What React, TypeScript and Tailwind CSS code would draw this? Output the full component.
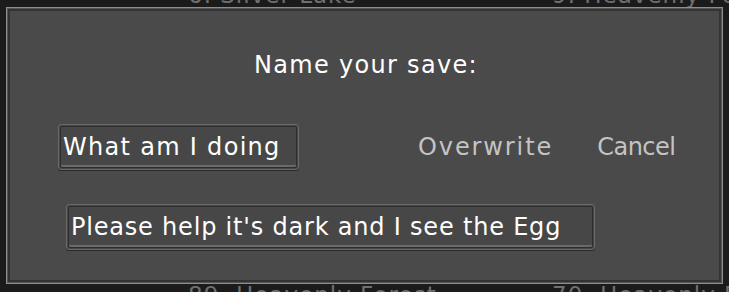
const font = { fontFamily: '"DejaVu Sans", "Liberation Sans", sans-serif' };

const SaveInput = ({ value, width, tracking }: { value: string; width: string; tracking: string }) => (
  <div
    className={`${width} h-[46px] rounded-[3px] border border-[#6a6a6a] bg-[#474747] p-[1px] shadow-[0_1px_0_#2a2a2a]`}
  >
    <div className="flex h-full items-center rounded-[2px] border border-[#2e2e2e] px-[2px] shadow-[inset_0_-2px_0_#6a6a6a]">
      <span className={`whitespace-nowrap text-[24px] leading-none text-white ${tracking}`}>{value}</span>
    </div>
  </div>
);

export default function App() {
  return (
    <div className="relative h-[292px] w-[729px] overflow-hidden bg-[#1b1b1b]" style={font}>
      {/* list behind the dialog */}
      <div className="grid h-full grid-cols-[188px_364px_1fr] grid-rows-[1fr_1fr] text-[23px] leading-none tracking-[1px] text-[#6f6f6f]">
        <div />
        <div className="-mt-[16px]">6. Silver Lake</div>
        <div className="-mt-[16px] whitespace-nowrap">9. Heavenly Forest</div>
        <div />
        <div className="self-end -mb-[15px] whitespace-nowrap">89. Heavenly Forest</div>
        <div className="self-end -mb-[15px] whitespace-nowrap">70. Heavenly Forest</div>
      </div>

      {/* dialog */}
      <div className="absolute left-[6px] top-[7px] h-[277px] w-[717px] border border-[#8e8e8e] bg-[#4a4a4a] shadow-[inset_0_0_0_1px_#555,inset_0_0_0_3px_#333]">
        <div className="flex flex-col">
          <div className="ml-[3px] mt-[45px] text-center text-[24px] leading-none tracking-[1.3px] text-white">Name your save:</div>
          <div className="mt-[47px] flex items-center">
            <div className="ml-[51px]">
              <SaveInput value="What am I doing" width="w-[241px]" tracking="tracking-[1.3px]" />
            </div>
            <button className="ml-[119px] text-[24px] leading-none tracking-[1.9px] text-[#c4c4c4]">Overwrite</button>
            <button className="ml-[44px] text-[24px] leading-none tracking-[-0.5px] text-[#c4c4c4]">Cancel</button>
          </div>
          <div className="ml-[59px] mt-[34px]">
            <SaveInput value="Please help it's dark and I see the Egg" width="w-[529px]" tracking="tracking-[0.8px]" />
          </div>
        </div>
      </div>
    </div>
  );
}
